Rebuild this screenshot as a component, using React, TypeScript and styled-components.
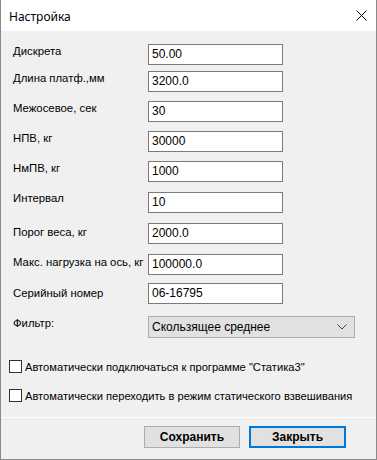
import React from "react";
import styled, { createGlobalStyle } from "styled-components";

const Global = createGlobalStyle`
  html, body { margin: 0; padding: 0; background: #ffffff; }
  * { box-sizing: border-box; }
`;

const Window = styled.div`
  width: 377px;
  height: 460px;
  display: flex;
  flex-direction: column;
  border: 1px solid #8a8a8a;
  border-top: none;
  background: #f0f0f0;
  font-family: "Liberation Sans", Arial, sans-serif;
  color: #000;
`;

const TitleBar = styled.div`
  height: 31px;
  flex: none;
  background: #ffffff;
  display: flex;
  align-items: center;
  justify-content: space-between;
  padding: 0 9px 0 8px;
`;

const Title = styled.span`
  font-family: "Noto Sans", "Open Sans", sans-serif;
  font-size: 12px;
  color: #000;
  margin-top: 1px;
`;

const CloseBtn = styled.div`
  width: 11px;
  height: 11px;
  display: flex;
`;

const Body = styled.div`
  flex: 1;
  display: flex;
  flex-direction: column;
  padding: 13px 0 0 12px;
`;

const Row = styled.div<{ $mt: number }>`
  display: flex;
  align-items: flex-start;
  margin-top: ${(p) => p.$mt}px;
  height: 21px;
`;

const Label = styled.label<{ $dy: number }>`
  width: 135px;
  font-size: 11.35px;
  line-height: 13px;
  padding-top: ${(p) => p.$dy}px;
  white-space: nowrap;
`;

const Input = styled.div`
  width: 135px;
  height: 21px;
  border: 1px solid #7a7a7a;
  background: #ffffff;
  font-size: 12px;
  line-height: 19px;
  padding-left: 3px;
`;

const Select = styled.div`
  width: 207px;
  height: 22px;
  border: 1px solid #adadad;
  background: #e1e1e1;
  display: flex;
  align-items: center;
  justify-content: space-between;
  padding: 0 7px 0 3px;
  font-size: 12px;
`;

const Checks = styled.div`
  display: flex;
  flex-direction: column;
  gap: 16px;
  margin-top: 23px;
  margin-left: -4px;
`;

const CheckRow = styled.div`
  display: flex;
  align-items: center;
  gap: 3px;
  font-size: 11.15px;
  height: 13px;
  white-space: nowrap;
`;

const Box = styled.span`
  width: 13px;
  height: 13px;
  border: 1px solid #333333;
  background: #ffffff;
  flex: none;
`;

const Footer = styled.div`
  height: 42px;
  flex: none;
  border-top: 1px solid #ffffff;
  display: flex;
  justify-content: flex-end;
  align-items: flex-start;
  gap: 9px;
  padding: 8px 30px 0 0;
`;

const Button = styled.button<{ $primary?: boolean }>`
  width: ${(p) => (p.$primary ? 97 : 96)}px;
  height: 22px;
  background: #e1e1e1;
  border: ${(p) => (p.$primary ? "2px solid #0078d7" : "1px solid #adadad")};
  font-family: "Liberation Sans", Arial, sans-serif;
  font-weight: bold;
  font-size: 12px;
  color: #000;
  padding: 0;
`;

const fields: { label: string; value: string; mt: number; dy: number }[] = [
  { label: "Дискрета", value: "50.00", mt: 0, dy: 1 },
  { label: "Длина платф.,мм", value: "3200.0", mt: 6, dy: 1 },
  { label: "Межосевое, сек", value: "30", mt: 9, dy: 1 },
  { label: "НПВ, кг", value: "30000", mt: 9, dy: 1 },
  { label: "НмПВ, кг", value: "1000", mt: 9, dy: 1 },
  { label: "Интервал", value: "10", mt: 10, dy: 0 },
  { label: "Порог веса, кг", value: "2000.0", mt: 10, dy: 3 },
  { label: "Макс. нагрузка на ось, кг", value: "100000.0", mt: 10, dy: 2 },
  { label: "Серийный номер", value: "06-16795", mt: 8, dy: 4 },
];

export default function App() {
  return (
    <>
      <Global />
      <Window>
        <TitleBar>
          <Title>Настройка</Title>
          <CloseBtn>
            <svg width="11" height="11" viewBox="0 0 11 11">
              <path d="M0.5 0.5 L10.5 10.5 M10.5 0.5 L0.5 10.5" stroke="#000" strokeWidth="1" fill="none" />
            </svg>
          </CloseBtn>
        </TitleBar>
        <Body>
          {fields.map((f) => (
            <Row key={f.label} $mt={f.mt}>
              <Label $dy={f.dy}>{f.label}</Label>
              <Input>{f.value}</Input>
            </Row>
          ))}
          <Row $mt={12}>
            <Label $dy={1}>Фильтр:</Label>
            <Select>
              <span>Скользящее среднее</span>
              <svg width="10" height="6" viewBox="0 0 10 6">
                <path d="M0.5 0.5 L5 5 L9.5 0.5" stroke="#444" strokeWidth="1" fill="none" />
              </svg>
            </Select>
          </Row>
          <Checks>
            <CheckRow>
              <Box />
              <span>Автоматически подключаться к программе "Статика3"</span>
            </CheckRow>
            <CheckRow>
              <Box />
              <span>Автоматически переходить в режим статического взвешивания</span>
            </CheckRow>
          </Checks>
        </Body>
        <Footer>
          <Button>Сохранить</Button>
          <Button $primary>Закрыть</Button>
        </Footer>
      </Window>
    </>
  );
}
